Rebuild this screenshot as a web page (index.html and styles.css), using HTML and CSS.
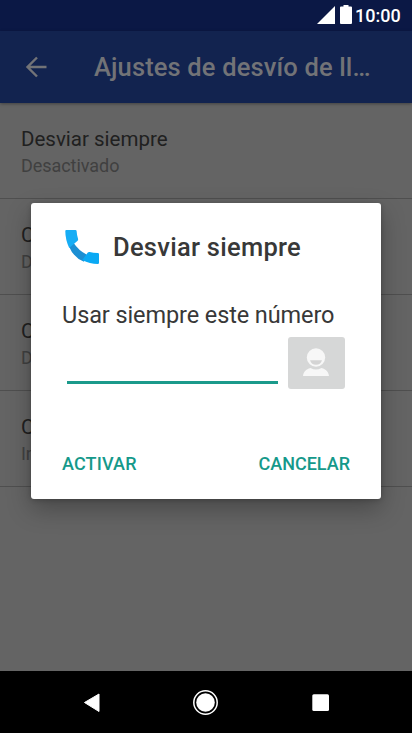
FILE: index.html
```html
<!DOCTYPE html>
<html lang="es">
<head>
<meta charset="utf-8">
<title>Ajustes de desvío de llamadas</title>
<link rel="stylesheet" href="styles.css">
</head>
<body>
<div class="phone">
  <header class="status">
    <svg class="signal" viewBox="0 0 18 18"><path d="M0 18 18 0v18z"/></svg>
    <svg class="battery" viewBox="0 0 12 19"><path d="M3.500 0h5v1.500H11q1 0 1 1V18q0 1-1 1H1q-1 0-1-1V2.500q0-1 1-1h2.500z"/></svg>
    <span class="clock">10:00</span>
  </header>
  <div class="appbar">
    <svg class="back" viewBox="0 0 22 22"><path d="M21.500 11H3M12 1.500 2.500 11 12 20.500"/></svg>
    <h1 class="title">Ajustes de desvío de ll…</h1>
  </div>
  <main class="list">
    <div class="item"><div class="name">Desviar siempre</div><div class="state">Desactivado</div></div>
    <div class="item"><div class="name">C</div><div class="state">D</div></div>
    <div class="item"><div class="name">C</div><div class="state">D</div></div>
    <div class="item"><div class="name">C</div><div class="state">In</div></div>
  </main>
  <nav class="nav">
    <svg viewBox="0 0 412 62">
      <path d="M84.500 31.500 99 23v17.500z" stroke="#fff" stroke-width="1" stroke-linejoin="round"/>
      <circle cx="205.500" cy="31.500" r="9.300"/>
      <circle cx="205.500" cy="31.500" r="11.700" fill="none" stroke="#fff" stroke-width="1.500"/>
      <rect x="312.300" y="23.300" width="16.700" height="16.700" rx="1.500"/>
    </svg>
  </nav>
  <section class="dialog">
    <div class="heading">
      <svg class="call" viewBox="0 0 34 34">
        <path fill="#1c8fd3" d="M4 16.500 8.500 12.800Q13.500 20.500 21.500 24.500L19 31.800Q8.500 27.500 4 16.500z"/>
        <path fill="#16adf5" d="M1.300 0H10.500q1 0 1.100 1 .3 4.500 1.500 8 .2 1-.5 1.700L4.200 18Q.3 9.500.3 1 .3 0 1.300 0z"/>
        <path fill="#0aa9f4" d="M22.800 22.500q.8-.8 2-.5 3 .9 8 1 1.200 0 1.200 1.200v8.600q0 1.200-1.200 1.200-8 0-15.500-4z"/>
      </svg>
      <h2 class="caption">Desviar siempre</h2>
    </div>
    <div class="label">Usar siempre este número</div>
    <div class="entry">
      <div class="field"></div>
      <div class="contact">
        <svg viewBox="0 0 26 28"><circle cx="13" cy="9.500" r="9.200" fill="#f7f7f7"/><path d="M7 12.200h12q-1.500 4.500-6 4.500t-6-4.500z" fill="#d4d4d4"/><path d="M0 28c.5-3.800 2.800-7 7.500-8q5.500 3 11 0c4.700 1 7 4.200 7.500 8z" fill="#f7f7f7"/></svg>
      </div>
    </div>
    <div class="actions"><span class="activate">ACTIVAR</span><span class="cancel">CANCELAR</span></div>
  </section>
</div>
</body>
</html>
```
FILE: styles.css
```css
* { box-sizing: border-box; }
body { margin: 0; font-family: Roboto, sans-serif; }
h1, h2 { margin: 0; font-weight: 500; }
svg { display: block; flex: none; }
.phone { position: relative; width: 412px; height: 733px; overflow: hidden; background: #646464; display: flex; flex-direction: column; }
.status { height: 31px; flex: none; background: #0b1845; display: flex; align-items: flex-start; padding: 0 11px 0 0; justify-content: flex-end; color: #fff; }
.signal { width: 18px; height: 18px; margin: 6px 5px 0 0; fill: #fff; }
.battery { width: 12px; height: 19px; margin: 5px 3px 0 0; fill: #fff; }
.clock { font-size: 18px; line-height: 22px; margin-top: 5px; width: 46px; font-weight: 500; white-space: nowrap; }
.appbar { height: 72px; flex: none; background: #12234f; display: flex; align-items: center; padding: 0 0 0 25px; box-shadow: 0 1px 3px rgba(0,0,0,.35); }
.back { width: 22px; height: 22px; fill: none; stroke: #727377; stroke-width: 2.400; }
.title { margin-left: 47px; font-size: 25.500px; line-height: 32px; color: #727377; white-space: nowrap; letter-spacing: .14px; }
.list { flex: 1; }
.item { height: 96px; border-bottom: 1px solid #4f4f4f; padding: 23px 0 0 21px; }
.name { font-size: 20.500px; line-height: 26px; color: #202020; }
.state { font-size: 18px; line-height: 24px; margin-top: 2px; color: #404040; letter-spacing: -.05px; }
.nav { height: 62px; flex: none; background: #000; }
.nav svg { width: 412px; height: 62px; fill: #fff; }
.dialog { position: absolute; left: 31px; top: 203px; width: 350px; height: 296px; background: #fff; border-radius: 3px; padding: 27px 31px 0; color: #383838; box-shadow: 0 10px 24px rgba(0,0,0,.28), 0 1px 5px rgba(0,0,0,.2); }
.heading { display: flex; align-items: center; height: 34px; padding-left: 3px; }
.call { width: 34px; height: 34px; }
.caption { margin-left: 14px; font-size: 25.500px; line-height: 34px; white-space: nowrap; letter-spacing: .27px; }
.label { margin-top: 36px; font-size: 23.500px; line-height: 30px; white-space: nowrap; letter-spacing: -.1px; }
.entry { display: flex; height: 52px; margin-top: 7px; }
.field { width: 211px; height: 47px; margin-left: 5px; border-bottom: 3px solid #1b9a8b; }
.contact { width: 57px; height: 52px; flex: none; margin-left: 10px; background: #d6d7d7; border-radius: 3px; padding: 11px 0 0 15px; }
.contact svg { width: 26px; height: 28px; }
.actions { margin-top: 63px; display: flex; justify-content: space-between; color: #15998a; font-size: 18px; line-height: 24px; font-weight: 500; }
.activate { letter-spacing: .15px; }
```
